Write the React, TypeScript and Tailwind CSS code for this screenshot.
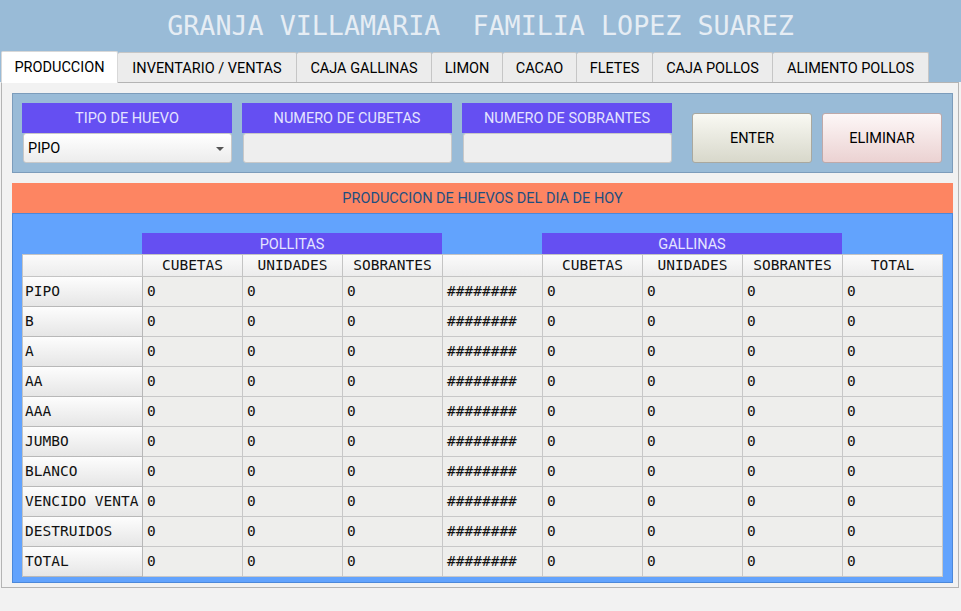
import React from "react";

const tabs: { label: string; w: number }[] = [
  { label: "PRODUCCION", w: 117 },
  { label: "INVENTARIO / VENTAS", w: 179 },
  { label: "CAJA GALLINAS", w: 135 },
  { label: "LIMON", w: 71 },
  { label: "CACAO", w: 74 },
  { label: "FLETES", w: 76 },
  { label: "CAJA POLLOS", w: 120 },
  { label: "ALIMENTO POLLOS", w: 156 },
];

const rows = ["PIPO", "B", "A", "AA", "AAA", "JUMBO", "BLANCO", "VENCIDO VENTA", "DESTRUIDOS", "TOTAL"];
const heads = ["", "CUBETAS", "UNIDADES", "SOBRANTES", "", "CUBETAS", "UNIDADES", "SOBRANTES", "TOTAL"];

const mono = "font-['DejaVu_Sans_Mono',monospace]";

export default function App() {
  return (
    <div className="w-[961px] h-[611px] bg-[#f2f2f2] font-['Roboto',sans-serif] overflow-hidden">
      {/* header */}
      <div className="bg-[#99bbd7] h-[82px] flex flex-col">
        <div className={`h-[51px] flex items-center justify-center text-[26.7px] text-[#e6edf4] ${mono} pt-[1px]`}>
          <span className="whitespace-pre">GRANJA VILLAMARIA  FAMILIA LOPEZ SUAREZ</span>
        </div>
        <div className="h-[31px] flex items-end pl-[1px]">
          {tabs.map((t, i) =>
            i === 0 ? (
              <div
                key={t.label}
                style={{ width: t.w }}
                className="h-[32px] -mb-[1px] relative z-10 bg-white border border-b-0 border-[#d8d8d8] rounded-t-[2px] flex items-center justify-center pt-[1px] text-[14.5px] text-black"
              >
                {t.label}
              </div>
            ) : (
              <div
                key={t.label}
                style={{ width: t.w }}
                className="h-[30px] bg-[#ececec] border border-b-0 border-l-0 border-[#c6c6c6] rounded-t-[2px] flex items-center justify-center pt-[2px] text-[14.5px] text-black"
              >
                {t.label}
              </div>
            )
          )}
        </div>
      </div>

      {/* pane */}
      <div className="ml-[1px] w-[958px] h-[506px] border border-[#b4b4b4] bg-[#f2f2f2] pl-[10px] pt-[10px]">
        {/* top panel */}
        <div className="w-[941px] h-[80px] bg-[#99bbd7] border border-[#7c9cbb] pl-[9px] pt-[9px] flex">
          {[
            { label: "TIPO DE HUEVO", select: true },
            { label: "NUMERO DE CUBETAS" },
            { label: "NUMERO DE SOBRANTES" },
          ].map((f) => (
            <div key={f.label} className="w-[210px] mr-[10px] flex flex-col">
              <div className="h-[30px] bg-[#654ff2] text-[#e4e4ff] text-[14.5px] flex items-center justify-center pt-[2px]">
                {f.label}
              </div>
              {f.select ? (
                <div className="h-[30px] ml-[1px] rounded-[3px] border border-[#c8c8c8] bg-gradient-to-b from-[#ffffff] to-[#ececec] flex items-center justify-between pl-[4px] pr-[7px] pt-[2px] text-[14.5px] text-black">
                  <span>PIPO</span>
                  <span className="w-0 h-0 border-l-[4px] border-r-[4px] border-t-[4px] border-l-transparent border-r-transparent border-t-[#555]" />
                </div>
              ) : (
                <div className="h-[30px] ml-[1px] rounded-[3px] border border-[#c8c8c8] bg-[#eeeeee]" />
              )}
            </div>
          ))}
          <div className="ml-[10px] mt-[10px] w-[120px] h-[50px] rounded-[3px] border border-[#a9a89f] bg-gradient-to-b from-[#f9f9f3] to-[#d8d8cb] flex items-center justify-center pt-[2px] text-[14.5px] text-black">
            ENTER
          </div>
          <div className="ml-[10px] mt-[10px] w-[120px] h-[50px] rounded-[3px] border border-[#bfa9a9] bg-gradient-to-b from-[#fdf7f7] to-[#ebd2d2] flex items-center justify-center pt-[2px] text-[14.5px] text-black">
            ELIMINAR
          </div>
        </div>

        {/* orange bar */}
        <div className="mt-[10px] w-[941px] h-[30px] bg-[#fd8562] flex items-center justify-center pt-[2px] text-[14.5px] text-[#1d4f80]">
          PRODUCCION DE HUEVOS DEL DIA DE HOY
        </div>

        {/* blue panel */}
        <div className="w-[941px] h-[370px] bg-[#62a3fd] border border-[#4b88da] pl-[9px] pt-[19px]">
          <div className="flex h-[21px]">
            <div className="w-[120px]" />
            <div className="w-[300px] bg-[#654ff2] text-[#e4e4ff] text-[14.5px] flex items-center justify-center pt-[2px]">POLLITAS</div>
            <div className="w-[100px]" />
            <div className="w-[300px] bg-[#654ff2] text-[#e4e4ff] text-[14.5px] flex items-center justify-center pt-[2px]">GALLINAS</div>
          </div>
          <div className={`grid grid-cols-[120px_repeat(8,100px)] w-[921px] border-l border-t border-[#c4c4c4] ${mono} text-[14.5px] text-[#111]`}>
            {heads.map((h, i) => (
              <div
                key={"h" + i}
                className="h-[22px] border-r border-b border-[#c4c4c4] bg-gradient-to-b from-[#fbfbfb] to-[#ececec] flex items-center justify-center pt-[1px]"
              >
                {h}
              </div>
            ))}
            {rows.map((r) => (
              <React.Fragment key={r}>
                <div className="h-[30px] border-r border-b border-[#b8b8b8] bg-gradient-to-b from-[#fdfdfd] to-[#e6e6e6] flex items-center pl-[2px] whitespace-nowrap overflow-hidden">
                  {r}
                </div>
                {Array.from({ length: 8 }).map((_, j) => (
                  <div
                    key={r + j}
                    className="h-[30px] border-r border-b border-[#c8c8c8] bg-[#eeeeec] flex items-center pl-[4px]"
                  >
                    {j === 3 ? "########" : "0"}
                  </div>
                ))}
              </React.Fragment>
            ))}
          </div>
        </div>
      </div>
    </div>
  );
}
